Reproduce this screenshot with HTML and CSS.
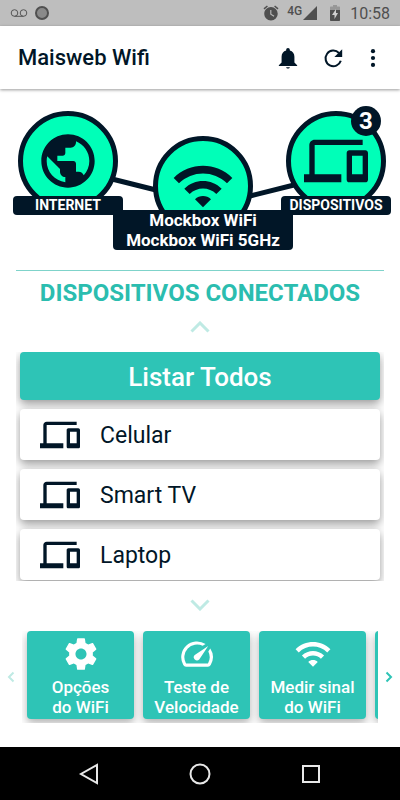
FILE: index.html
```html
<!DOCTYPE html>
<html lang="pt-BR">
<head>
<meta charset="utf-8">
<meta name="viewport" content="width=device-width, initial-scale=1">
<title>Maisweb Wifi</title>
<link rel="stylesheet" href="styles.css">
</head>
<body>
<svg class="sprite" aria-hidden="true">
  <symbol id="devices" viewBox="0 0 24 24"><path d="M4 6h18V4H4c-1.100 0-2 .9-2 2v11H0v3h14v-3H4V6zm19 2h-6c-.55 0-1 .45-1 1v10c0 .55.45 1 1 1h6c.55 0 1-.45 1-1V9c0-.55-.45-1-1-1zm-1 9h-4v-7h4v7z"/></symbol>
  <symbol id="wifi" viewBox="0 0 24 24"><path d="M1 9l2 2c4.970-4.970 13.030-4.970 18 0l2-2C16.930 2.930 7.080 2.930 1 9zm8 8l3 3 3-3c-1.650-1.660-4.340-1.660-6 0zm-4-4l2 2c2.760-2.760 7.240-2.760 10 0l2-2C15.140 9.140 8.870 9.140 5 13z"/></symbol>
</svg>

<div class="status">
  <div class="status-group">
    <svg class="voicemail" viewBox="0 0 18 10"><circle cx="4.500" cy="5" r="3.300"/><circle cx="13.500" cy="5" r="3.300"/><path d="M4.500 8.300h9"/></svg>
    <svg class="disc" viewBox="0 0 16 16"><circle cx="8" cy="8" r="6"/></svg>
  </div>
  <div class="status-group">
    <svg class="status-icon alarm" viewBox="0 0 24 24"><path d="M22 5.720l-4.600-3.860-1.290 1.530 4.600 3.860L22 5.720zM7.880 3.390L6.600 1.860 2 5.710l1.290 1.530 4.590-3.850zM12 4c-4.970 0-9 4.030-9 9s4.020 9 9 9a9 9 0 0 0 0-18zm3.700 12.900L11 14V8h1.500v5.200l4 2.400z"/></svg>
    <span class="network">4G</span>
    <svg class="status-icon signal" viewBox="0 0 14 14"><path d="M14 0v14H0z"/></svg>
    <svg class="status-icon battery" viewBox="0 0 10 16"><path class="battery-top" d="M3 0h4v1.500h2.200q.8 0 .8.8V5H0V2.300q0-.8.8-.8H3z"/><path d="M0 5h10v10.200q0 .8-.8.8H.8q-.8 0-.8-.8z"/><path class="bolt" d="M6 4L2 10h2.500v4L8 8H6z"/></svg>
    <time class="clock">10:58</time>
  </div>
</div>

<header class="toolbar">
  <h1 class="title">Maisweb Wifi</h1>
  <button class="tool" aria-label="Notificações"><svg viewBox="0 0 24 24"><path d="M12 23.500c1.100 0 2-.7 2-1.500h-4c0 .8.900 1.500 2 1.500zM19 17v-6.500c0-3.300-1.900-6-5-6.700V3.200C14 2 13.200 1 12 1s-2 1-2 2.200v.6c-3.100.7-5 3.400-5 6.700V17l-3 3v.8h20V20z"/></svg></button>
  <button class="tool" aria-label="Atualizar"><svg viewBox="0 0 24 24"><path d="M20.500 15A8.500 8.500 0 1 1 18.500 6.500" fill="none" stroke="currentColor" stroke-width="2.200"/><path d="M22 2.500v8.500h-8.500z"/></svg></button>
  <button class="tool" aria-label="Mais opções"><svg viewBox="0 0 24 24"><circle cx="12" cy="4.500" r="2.300"/><circle cx="12" cy="12" r="2.300"/><circle cx="12" cy="19.500" r="2.300"/></svg></button>
</header>

<main class="content">
  <section class="diagram" aria-label="Rede">
    <svg class="links" viewBox="0 0 380 142"><path d="M98 66l48 12M240 84l48-12"/></svg>
    <div class="node internet">
      <div class="bubble"><svg viewBox="0 0 24 24"><path d="M12 2C6.480 2 2 6.480 2 12s4.480 10 10 10 10-4.480 10-10S17.520 2 12 2zm-1 17.930c-3.950-.49-7-3.850-7-7.930 0-.62.08-1.210.21-1.790L9 15v1c0 1.100.9 2 2 2v1.930zm6.900-2.540c-.26-.81-1-1.390-1.900-1.390h-1v-3c0-.55-.45-1-1-1H8v-2h2c.55 0 1-.45 1-1V7h2c1.100 0 2-.9 2-2v-.41c2.930 1.190 5 4.060 5 7.410 0 2.080-.8 3.970-2.100 5.390z"/></svg></div>
      <span class="label">INTERNET</span>
    </div>
    <div class="node devices">
      <div class="bubble"><svg><use href="#devices"/></svg></div>
      <span class="label">DISPOSITIVOS</span>
      <span class="badge">3</span>
    </div>
    <div class="node router">
      <div class="bubble"><svg><use href="#wifi"/></svg></div>
      <span class="label label-large">Mockbox WiFi<br>Mockbox WiFi 5GHz</span>
    </div>
  </section>

  <section class="connected">
    <h2 class="heading">DISPOSITIVOS CONECTADOS</h2>
    <svg class="chevron" viewBox="0 0 20 12"><path d="M1.500 10.500L10 2l8.500 8.500"/></svg>
    <div class="list">
      <button class="list-all">Listar Todos</button>
      <button class="item"><svg><use href="#devices"/></svg>Celular</button>
      <button class="item"><svg><use href="#devices"/></svg>Smart TV</button>
      <button class="item"><svg><use href="#devices"/></svg>Laptop</button>
    </div>
    <svg class="chevron" viewBox="0 0 20 12"><path d="M1.500 1.500L10 10l8.500-8.500"/></svg>
  </section>

  <section class="carousel">
    <button class="arrow arrow-off" aria-label="Anterior"><svg viewBox="0 0 8 12"><path d="M6.500 1.500L2 6l4.500 4.500"/></svg></button>
    <div class="track">
      <button class="card"><svg viewBox="0 0 24 24"><path d="M19.430 12.980c.04-.32.07-.64.07-.98s-.03-.66-.07-.98l2.110-1.650c.19-.15.24-.42.12-.64l-2-3.460c-.12-.22-.39-.3-.61-.22l-2.490 1c-.52-.4-1.080-.73-1.690-.98l-.38-2.650C14.460 2.180 14.250 2 14 2h-4c-.25 0-.46.18-.49.42l-.38 2.650c-.61.25-1.170.59-1.690.98l-2.490-1c-.23-.09-.49 0-.61.22l-2 3.460c-.13.22-.07.49.12.64l2.110 1.650c-.04.32-.07.65-.07.98s.03.66.07.98l-2.110 1.650c-.19.15-.24.42-.12.64l2 3.460c.12.22.39.3.61.22l2.490-1c.52.4 1.080.73 1.690.98l.38 2.650c.03.24.24.42.49.42h4c.25 0 .46-.18.49-.42l.38-2.650c.61-.25 1.170-.59 1.690-.98l2.490 1c.23.09.49 0 .61-.22l2-3.460c.12-.22.07-.49-.12-.64l-2.110-1.650zM12 15.500c-1.930 0-3.500-1.570-3.500-3.500s1.570-3.500 3.500-3.500 3.500 1.570 3.500 3.500-1.570 3.500-3.500 3.500z"/></svg><span>Opções<br>do WiFi</span></button>
      <button class="card"><svg viewBox="0 0 24 24"><path d="M20.380 8.570l-1.230 1.850a8 8 0 0 1-.22 7.580H5.070A8 8 0 0 1 15.580 6.850l1.850-1.230A10 10 0 0 0 3.350 19a2 2 0 0 0 1.720 1h13.850a2 2 0 0 0 1.740-1 10 10 0 0 0-.27-10.440zm-9.790 6.840a2 2 0 0 0 2.830 0l5.660-8.490-8.490 5.660a2 2 0 0 0 0 2.830z"/></svg><span>Teste de<br>Velocidade</span></button>
      <button class="card"><svg><use href="#wifi"/></svg><span>Medir sinal<br>do WiFi</span></button>
      <button class="card" aria-label="Mais"></button>
    </div>
    <button class="arrow" aria-label="Próximo"><svg viewBox="0 0 8 12"><path d="M1.500 1.500L6 6l-4.500 4.500"/></svg></button>
  </section>
</main>

<nav class="system-nav">
  <button aria-label="Voltar"><svg viewBox="0 0 22 22"><path d="M19 2v18L3 11z"/></svg></button>
  <button aria-label="Início"><svg viewBox="0 0 22 22"><circle cx="11" cy="11" r="9.500"/></svg></button>
  <button aria-label="Recentes"><svg viewBox="0 0 22 22"><path d="M3 3h16v16H3z"/></svg></button>
</nav>
</body>
</html>
```

FILE: styles.css
```css
:root {
  --teal: #2ec4b6;
  --mint: #00ffb8;
  --navy: #011627;
}

* {
  box-sizing: border-box;
}

body {
  margin: 0;
  min-height: 100vh;
  display: flex;
  flex-direction: column;
  background: #fff;
  color: var(--navy);
  font-family: Roboto, "Liberation Sans", sans-serif;
}

button {
  margin: 0;
  padding: 0;
  border: 0;
  background: none;
  color: inherit;
  font: inherit;
}

svg {
  display: block;
  flex: none;
  fill: currentColor;
}

.sprite {
  position: absolute;
  width: 0;
  height: 0;
}

.status {
  height: 26px;
  padding: 0 10px;
  display: flex;
  align-items: center;
  justify-content: space-between;
  background: #bebebe;
  color: #4f4f4f;
}

.status-group {
  display: flex;
  align-items: center;
}

.voicemail {
  width: 18px;
  height: 10px;
  margin-right: 6px;
  fill: none;
  stroke: #555;
}

.disc {
  width: 16px;
  height: 16px;
  fill: #8a8a8a;
  stroke: #505050;
  stroke-width: 2;
}

.alarm {
  width: 18px;
  height: 18px;
  margin-right: 7px;
}

.network {
  margin-bottom: 4px;
  font-size: 12px;
  line-height: 12px;
  font-weight: 500;
}

.signal {
  width: 14px;
  height: 14px;
  margin: 0 13px 0 1px;
}

.battery {
  width: 10px;
  height: 16px;
  margin-right: 10px;
}

.battery-top {
  fill: #979797;
}

.bolt {
  fill: #d0d0d0;
}

.clock {
  padding-top: 2px;
  font-size: 16px;
  line-height: 24px;
}

.toolbar {
  height: 63px;
  padding: 0 16px 0 18px;
  display: flex;
  align-items: center;
  gap: 23px;
  box-shadow: 0 1px 3px rgba(0, 0, 0, 0.4);
}

.title {
  flex: 1;
  margin: 0;
  padding-top: 1px;
  font-size: 22px;
  line-height: 28px;
  font-weight: 500;
}

.tool svg {
  width: 22px;
  height: 22px;
}

.tool:last-child {
  margin-left: -5px;
}

.content {
  flex: 1;
  padding: 17px 0 24px;
}

.diagram {
  position: relative;
  width: 380px;
  height: 145px;
  margin: 0 auto;
}

.links {
  position: absolute;
  left: 0;
  top: 6px;
  width: 380px;
  height: 142px;
  stroke: var(--navy);
  stroke-width: 5;
}

.node {
  position: absolute;
  display: flex;
  flex-direction: column;
  align-items: center;
}

.internet {
  left: 3px;
  top: 5px;
}

.devices {
  right: -1px;
  top: 5px;
}

.router {
  left: 103px;
  top: 30px;
}

.bubble {
  width: 100px;
  height: 100px;
  display: grid;
  place-items: center;
  border: 5px solid var(--navy);
  border-radius: 50%;
  background: var(--mint);
}

.bubble svg {
  width: 64px;
  height: 64px;
}

.label {
  width: 110px;
  margin-top: -15px;
  border-radius: 4px;
  background: var(--navy);
  color: #fff;
  font-size: 14px;
  line-height: 19px;
  font-weight: 700;
  text-align: center;
}

.label-large {
  width: 180px;
  margin-top: -26px;
  font-size: 17px;
  line-height: 20px;
}

.badge {
  position: absolute;
  right: 10px;
  top: -5px;
  width: 30px;
  height: 30px;
  border-radius: 50%;
  background: var(--navy);
  color: #fff;
  font-size: 24px;
  line-height: 30px;
  font-weight: 700;
  text-align: center;
}

.connected {
  margin: 19px 16px 0;
  border-top: 1px solid #7fd3ca;
}

.heading {
  margin: 8px 0 14px;
  color: #2bbdaf;
  font-size: 24px;
  line-height: 28px;
  font-weight: 700;
  text-align: center;
}

.chevron {
  width: 20px;
  height: 12px;
  margin: 0 auto;
  fill: none;
  stroke: #bfeae4;
  stroke-width: 3;
}

.list {
  margin: 19px 0 18px;
  padding: 0 4px 1px;
  display: flex;
  flex-direction: column;
  gap: 9px;
  overflow: hidden;
}

.list-all,
.item {
  border-radius: 4px;
  box-shadow: 0 4px 10px rgba(0, 0, 0, 0.4);
}

.list-all {
  height: 48px;
  padding-top: 2px;
  background: var(--teal);
  color: #fff;
  font-size: 26px;
  font-weight: 500;
}

.item {
  height: 51px;
  padding: 2px 20px 0;
  display: flex;
  align-items: center;
  gap: 20px;
  background: #fff;
  font-size: 23px;
}

.item svg {
  width: 40px;
  height: 40px;
  margin-bottom: 2px;
}

.carousel {
  margin-top: 20px;
  display: flex;
  align-items: center;
}

.arrow {
  flex: none;
  width: 22px;
  display: grid;
  place-items: center;
  color: var(--teal);
}

.arrow-off {
  color: #bfeae4;
}

.arrow svg {
  width: 8px;
  height: 12px;
  fill: none;
  stroke: currentColor;
  stroke-width: 2;
}

.track {
  flex: 1;
  min-width: 0;
  padding: 0 0 4px 5px;
  display: flex;
  gap: 9px;
  overflow: hidden;
}

.card {
  flex: none;
  width: 107px;
  height: 88px;
  display: flex;
  flex-direction: column;
  align-items: center;
  justify-content: flex-start;
  padding-top: 4px;
  gap: 4px;
  border-radius: 4px;
  background: var(--teal);
  box-shadow: 0 4px 8px rgba(0, 0, 0, 0.3);
  color: #fff;
  font-size: 17px;
  line-height: 20px;
  font-weight: 500;
}

.card svg {
  width: 38px;
  height: 38px;
}

.system-nav {
  height: 53px;
  padding: 0 34px;
  display: flex;
  align-items: center;
  justify-content: space-around;
  background: #000;
}

.system-nav svg {
  width: 22px;
  height: 22px;
  fill: none;
  stroke: #e8e8e8;
  stroke-width: 2;
}
```
